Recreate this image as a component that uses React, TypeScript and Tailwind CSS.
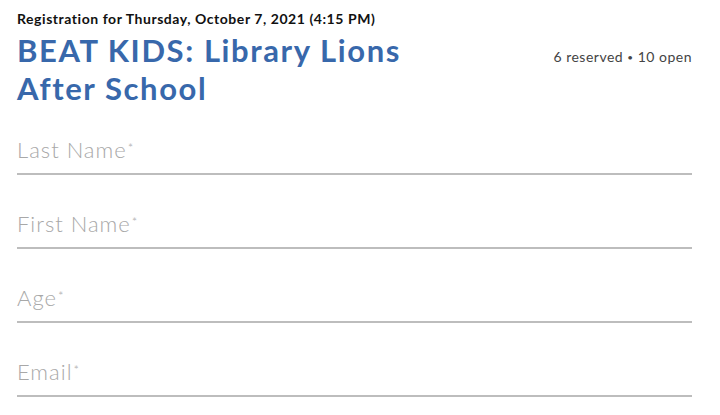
const fields = ["Last Name", "First Name", "Age", "Email"];

export default function App() {
  return (
    <div className="w-[720px] h-[415px] bg-white overflow-hidden px-[17px] pt-[10px] font-['Lato','Noto_Sans',sans-serif]">
      <div className="w-[675px]">
        <p className="text-[14px] leading-[18px] font-bold text-[#111] tracking-[0.55px]">
          Registration for Thursday, October 7, 2021 (4:15 PM)
        </p>
        <div className="flex items-start justify-between">
          <h1 className="mt-[3px] text-[31px] leading-[38px] font-bold text-[#3868ab] w-[440px] tracking-[1.6px]">
            BEAT KIDS: Library Lions After School
          </h1>
          <span className="mt-[18px] text-[14px] text-[#444] tracking-[0.5px]">
            6 reserved <span className="text-[10px] align-[1px]">•</span> 10 open
          </span>
        </div>
        <form className="mt-[2px] flex flex-col">
          {fields.map((f) => (
            <label
              key={f}
              className="h-[74px] flex items-end pb-[12px] border-b-2 border-[#bdbdbd] first:h-[66px]"
            >
              <span className="text-[22px] font-light text-[#a8a8a8] leading-none tracking-[1px]">
                {f}
                <sup className="text-[13px] -top-[0.4em] ml-[1px]">*</sup>
              </span>
            </label>
          ))}
        </form>
      </div>
    </div>
  );
}
